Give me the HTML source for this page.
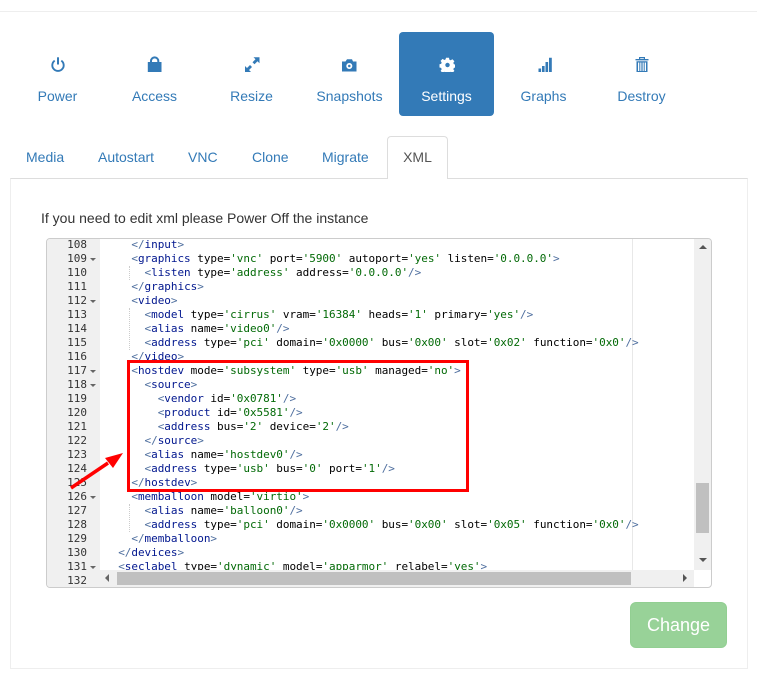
<!DOCTYPE html>
<html><head><meta charset="utf-8"><style>
*{box-sizing:border-box}
html,body{margin:0;padding:0;background:#fff;width:757px;height:677px;overflow:hidden;font-family:"Liberation Sans",Arial,sans-serif;font-size:14px;color:#333}
.abs{position:absolute}
#top{position:absolute;left:0;top:11px;width:757px;height:1px;background:#eee}
.pill{position:absolute;top:32px;height:84px;text-align:center;color:#337ab7;line-height:20px}
.pill span{position:absolute;left:0;right:0;top:54px}
.pill svg{position:absolute;top:24px;left:50%;margin-left:-8px;width:16px;height:16px;fill:#337ab7}
.on{background:#337ab7;color:#fff;border-radius:4px}
.on svg{fill:#fff}
.tab{position:absolute;top:147px;line-height:20px;color:#337ab7;white-space:nowrap}
#xmltab{position:absolute;left:387px;top:136px;width:61px;height:43px;border:1px solid #ddd;border-bottom:0;border-radius:4px 4px 0 0;background:#fff;color:#555;text-align:center;line-height:41px;z-index:2}
#panel{position:absolute;left:10px;top:178px;width:738px;height:491px;border:1px solid #eee;border-top-color:#ddd}
#msg{position:absolute;left:41px;top:208px;line-height:20px;color:#333}
#ed{position:absolute;left:46px;top:238px;width:666px;height:350px;border:1px solid #ccc;border-radius:4px;overflow:hidden;background:#fff}
#gut{position:absolute;left:0;top:0;width:53px;height:348px;background:#f0f0f0}
.n{position:absolute;left:0;width:40px;margin-top:1px;text-align:right;height:14px;font:11px/14px "DejaVu Sans Mono","Liberation Mono",monospace;color:#333}
.f{position:absolute;left:43px;margin-top:1px;width:0;height:0;border-left:3.5px solid transparent;border-right:3.5px solid transparent;border-top:3.5px solid #666}
#pm{position:absolute;left:585px;top:0;width:1px;height:348px;background:#e8e8e8}
#code{position:absolute;left:58px;top:-1px;font:11px/14px "DejaVu Sans Mono","Liberation Mono",monospace;letter-spacing:-.036px;color:#000;white-space:pre}
#code i{font-style:normal;color:#00168e}
#code b{font-weight:normal;color:#036a07}
#code u{text-decoration:none;color:#4f6f9f}
.g{position:absolute;width:1px;margin-top:1px;border-left:1px dotted #ccc}
#hb{position:absolute;left:53px;top:331px;width:594px;height:17px;background:#f0f0f0}
#vb{position:absolute;left:647px;top:0;width:17px;height:331px;background:#f0f0f0}
.hth{position:absolute;left:17px;top:2px;width:514px;height:13px;background:#c0c0c0}
.vth{position:absolute;left:2px;top:244px;width:13px;height:50px;background:#c0c0c0}
.ar{position:absolute;width:0;height:0}
#btn{position:absolute;left:630px;top:602px;width:97px;height:46px;border-radius:6px;background:#98d298;border:1px solid #92cf92;color:#fff;font-size:18px;line-height:44px;text-align:center}
</style></head><body>
<div id="top"></div>

<div class="pill" style="left:10px;width:95px"><svg viewBox="0 0 16 16"><path d="M8 1.300v7.200" stroke="#337ab7" stroke-width="2" fill="none"/><path d="M4.700 4.600a5.700 5.700 0 1 0 6.600 0" stroke="#337ab7" stroke-width="1.900" fill="none"/></svg><span>Power</span></div>
<div class="pill" style="left:107px;width:95px"><svg viewBox="0 0 16 16"><path d="M.8 6h13.700v10H.8z"/><path d="M4 7V5a3.650 3.650 0 0 1 7.300 0v2" fill="none" stroke="#337ab7" stroke-width="2"/></svg><span>Access</span></div>
<div class="pill" style="left:204px;width:95px"><svg viewBox="0 0 16 16"><path d="M9.500 1.300h6v6l-2-2-3 3-2-2 3-3z"/><path d="M7 16H1v-6l2 2 3-3 2 2-3 3z"/></svg><span>Resize</span></div>
<div class="pill" style="left:302px;width:95px"><svg viewBox="0 0 16 16"><path fill-rule="evenodd" d="M0 5.500h3.500L5 3.300h5l1 2.200h3.500v10H0zM7.300 7a3 3 0 1 0 .01 0zM7.300 8.700a1.300 1.300 0 1 1-.01 0z"/></svg><span>Snapshots</span></div>
<div class="pill on" style="left:399px;width:95px"><svg viewBox="0 0 16 16"><path fill-rule="evenodd" d="M7 1.700h3l.4 2 1.300.6 1.700-1.100 2 2-1.100 1.700.6 1.300 1.600.4v2.900l-1.600.4-.6 1.300 1.100 1.700-2 2-1.700-1.100-1.300.6-.4 1.900H7l-.4-1.900-1.300-.6-1.700 1.100-2-2 1.100-1.700-.6-1.300-1.600-.4V8.300l1.600-.4.6-1.300-1.100-1.700 2-2 1.700 1.100 1.300-.6zM8.500 6.800a2.200 2.200 0 1 0 .01 0z"/></svg><span>Settings</span></div>
<div class="pill" style="left:496px;width:95px"><svg viewBox="0 0 16 16"><path d="M2.500 12.500h2.600V16H2.500zM6 10h2.600v6H6zM9.500 6h2.600v10H9.500zM13 1.700h2.800V16H13z"/></svg><span>Graphs</span></div>
<div class="pill" style="left:594px;width:95px"><svg viewBox="0 0 16 16"><path d="M1.500 3h13v1.400h-13zM5 3V1h6v2H9.800V2.200H6.200V3z"/><path fill-rule="evenodd" d="M2.500 5.200h11V16h-11zM4 6.500V15h1.300V6.500zM6.300 6.500V15h1.100V6.500zM8.600 6.500V15h1.100V6.500zM10.700 6.500V15H12V6.500z"/></svg><span>Destroy</span></div>

<div class="tab" style="left:26px">Media</div>
<div class="tab" style="left:98px">Autostart</div>
<div class="tab" style="left:188px">VNC</div>
<div class="tab" style="left:252px">Clone</div>
<div class="tab" style="left:322px">Migrate</div>
<div id="panel"></div>
<div id="xmltab">XML</div>
<div id="msg">If you need to edit xml please Power Off the instance</div>

<div id="ed">
<div id="gut">
<div class="n" style="top:-2px">108</div>
<div class="n" style="top:12px">109</div><div class="f" style="top:18px"></div>
<div class="n" style="top:26px">110</div>
<div class="n" style="top:40px">111</div>
<div class="n" style="top:54px">112</div><div class="f" style="top:60px"></div>
<div class="n" style="top:68px">113</div>
<div class="n" style="top:82px">114</div>
<div class="n" style="top:96px">115</div>
<div class="n" style="top:110px">116</div>
<div class="n" style="top:124px">117</div><div class="f" style="top:130px"></div>
<div class="n" style="top:138px">118</div><div class="f" style="top:144px"></div>
<div class="n" style="top:152px">119</div>
<div class="n" style="top:166px">120</div>
<div class="n" style="top:180px">121</div>
<div class="n" style="top:194px">122</div>
<div class="n" style="top:208px">123</div>
<div class="n" style="top:222px">124</div>
<div class="n" style="top:236px">125</div>
<div class="n" style="top:250px">126</div><div class="f" style="top:256px"></div>
<div class="n" style="top:264px">127</div>
<div class="n" style="top:278px">128</div>
<div class="n" style="top:292px">129</div>
<div class="n" style="top:306px">130</div>
<div class="n" style="top:320px">131</div><div class="f" style="top:326px"></div>
<div class="n" style="top:334px">132</div>
</div>
<div id="pm"></div>
<div class="g" style="left:82px;top:26px;height:14px"></div>
<div class="g" style="left:82px;top:68px;height:42px"></div>
<div class="g" style="left:82px;top:138px;height:98px"></div>
<div class="g" style="left:82px;top:264px;height:28px"></div>
<div id="code"><span>    <u>&lt;/</u><i>input</i><u>&gt;</u>
    <u>&lt;</u><i>graphics</i> type=<b>'vnc'</b> port=<b>'5900'</b> autoport=<b>'yes'</b> listen=<b>'0.0.0.0'</b><u>&gt;</u>
      <u>&lt;</u><i>listen</i> type=<b>'address'</b> address=<b>'0.0.0.0'</b><u>/&gt;</u>
    <u>&lt;/</u><i>graphics</i><u>&gt;</u>
    <u>&lt;</u><i>video</i><u>&gt;</u>
      <u>&lt;</u><i>model</i> type=<b>'cirrus'</b> vram=<b>'16384'</b> heads=<b>'1'</b> primary=<b>'yes'</b><u>/&gt;</u>
      <u>&lt;</u><i>alias</i> name=<b>'video0'</b><u>/&gt;</u>
      <u>&lt;</u><i>address</i> type=<b>'pci'</b> domain=<b>'0x0000'</b> bus=<b>'0x00'</b> slot=<b>'0x02'</b> function=<b>'0x0'</b><u>/&gt;</u>
    <u>&lt;/</u><i>video</i><u>&gt;</u>
    <u>&lt;</u><i>hostdev</i> mode=<b>'subsystem'</b> type=<b>'usb'</b> managed=<b>'no'</b><u>&gt;</u>
      <u>&lt;</u><i>source</i><u>&gt;</u>
        <u>&lt;</u><i>vendor</i> id=<b>'0x0781'</b><u>/&gt;</u>
        <u>&lt;</u><i>product</i> id=<b>'0x5581'</b><u>/&gt;</u>
        <u>&lt;</u><i>address</i> bus=<b>'2'</b> device=<b>'2'</b><u>/&gt;</u>
      <u>&lt;/</u><i>source</i><u>&gt;</u>
      <u>&lt;</u><i>alias</i> name=<b>'hostdev0'</b><u>/&gt;</u>
      <u>&lt;</u><i>address</i> type=<b>'usb'</b> bus=<b>'0'</b> port=<b>'1'</b><u>/&gt;</u>
    <u>&lt;/</u><i>hostdev</i><u>&gt;</u>
    <u>&lt;</u><i>memballoon</i> model=<b>'virtio'</b><u>&gt;</u>
      <u>&lt;</u><i>alias</i> name=<b>'balloon0'</b><u>/&gt;</u>
      <u>&lt;</u><i>address</i> type=<b>'pci'</b> domain=<b>'0x0000'</b> bus=<b>'0x00'</b> slot=<b>'0x05'</b> function=<b>'0x0'</b><u>/&gt;</u>
    <u>&lt;/</u><i>memballoon</i><u>&gt;</u>
  <u>&lt;/</u><i>devices</i><u>&gt;</u>
  <u>&lt;</u><i>seclabel</i> type=<b>'dynamic'</b> model=<b>'apparmor'</b> relabel=<b>'yes'</b><u>&gt;</u></span></div>
<div id="hb"><div class="hth"></div>
<div class="ar" style="left:5px;top:4px;border-top:4px solid transparent;border-bottom:4px solid transparent;border-right:4px solid #666"></div>
<div class="ar" style="left:583px;top:4px;border-top:4px solid transparent;border-bottom:4px solid transparent;border-left:4px solid #555"></div>
</div>
<div id="vb"><div class="vth"></div>
<div class="ar" style="left:5px;top:6px;border-left:4px solid transparent;border-right:4px solid transparent;border-bottom:4px solid #555"></div>
<div class="ar" style="left:5px;top:319px;border-left:4px solid transparent;border-right:4px solid transparent;border-top:4px solid #555"></div>
</div>
</div>

<svg class="abs" style="left:0;top:0;z-index:5" width="757" height="677" viewBox="0 0 757 677">
<rect x="128.500" y="361.500" width="339" height="129" fill="none" stroke="#f00" stroke-width="3"/>
<path d="M71 488L108 463" stroke="#f00" stroke-width="3.500" fill="none"/>
<path d="M123 453L105 458L113 468Z" fill="#f00"/>
</svg>

<div id="btn">Change</div>
</body></html>
